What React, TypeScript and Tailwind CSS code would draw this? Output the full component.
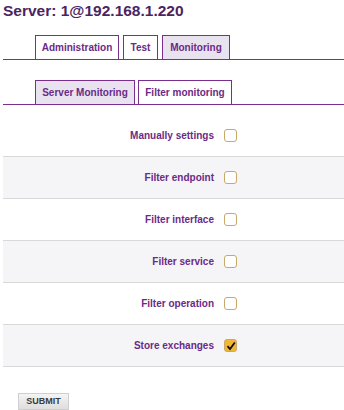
import { useState } from "react";

const font = { fontFamily: '"Liberation Sans", Arial, sans-serif' };

const rows = [
  { label: "Manually settings", checked: false },
  { label: "Filter endpoint", checked: false },
  { label: "Filter interface", checked: false },
  { label: "Filter service", checked: false },
  { label: "Filter operation", checked: false },
  { label: "Store exchanges", checked: true },
];

function Tab({ label, width, active }: { label: string; width: string; active?: boolean }) {
  return (
    <div
      className={`${width} flex h-[24px] items-center justify-center border border-b-0 border-[#7a2f8f] text-[10px] font-bold text-[#6b2a86] ${
        active ? "bg-[#e9e3ef]" : "bg-white"
      }`}
    >
      {label}
    </div>
  );
}

function Box({ checked, onToggle }: { checked: boolean; onToggle: () => void }) {
  return (
    <button
      onClick={onToggle}
      className={`flex h-[13px] w-[13px] items-center justify-center rounded-[3px] border border-[#c7a96c] ${
        checked ? "bg-[#f3b633]" : "bg-white"
      }`}
    >
      {checked && (
        <svg width="10" height="10" viewBox="0 0 10 10">
          <path d="M1.5 5.2 L4 8 L8.8 1.5" fill="none" stroke="#111" strokeWidth="1.8" />
        </svg>
      )}
    </button>
  );
}

export default function App() {
  const [state, setState] = useState(rows.map((r) => r.checked));

  return (
    <div className="min-h-[410px] w-[344px] bg-white pl-[3px]" style={font}>
      <div className="h-[20px] pt-[1px] text-[15.5px] font-bold leading-[20px] text-[#4a2560]">
        Server: 1@192.168.1.220
      </div>

      <div className="mt-[15px] flex gap-[4px] border-b border-[#7a2f8f] pl-[32px]">
        <Tab label="Administration" width="w-[84px]" />
        <Tab label="Test" width="w-[35px]" />
        <Tab label="Monitoring" width="w-[68px]" active />
      </div>

      <div className="mt-[20px] flex gap-[3px] border-b border-[#7a2f8f] pl-[32px]">
        <Tab label="Server Monitoring" width="w-[100px]" active />
        <Tab label="Filter monitoring" width="w-[94px]" />
      </div>

      <div className="mt-[10px]">
        {rows.map((row, i) => (
          <div
            key={row.label}
            className={`flex h-[42px] items-center border-b border-[#d9d9d9] ${
              i % 2 === 1 ? "bg-[#f5f4f7]" : "bg-white"
            }`}
          >
            <div className="w-[211px] text-right text-[10px] font-bold text-[#6b2a86]">
              {row.label}
            </div>
            <div className="ml-[10px]">
              <Box
                checked={state[i]}
                onToggle={() => setState((s) => s.map((v, j) => (j === i ? !v : v)))}
              />
            </div>
          </div>
        ))}
      </div>

      <div className="mt-[20px] pl-[15px]">
        <button className="h-[17px] w-[51px] border border-[#cfcfcf] bg-gradient-to-b from-[#f4f4f4] to-[#dedede] text-[9px] font-bold text-[#3a3a3a]">
          SUBMIT
        </button>
      </div>
    </div>
  );
}
